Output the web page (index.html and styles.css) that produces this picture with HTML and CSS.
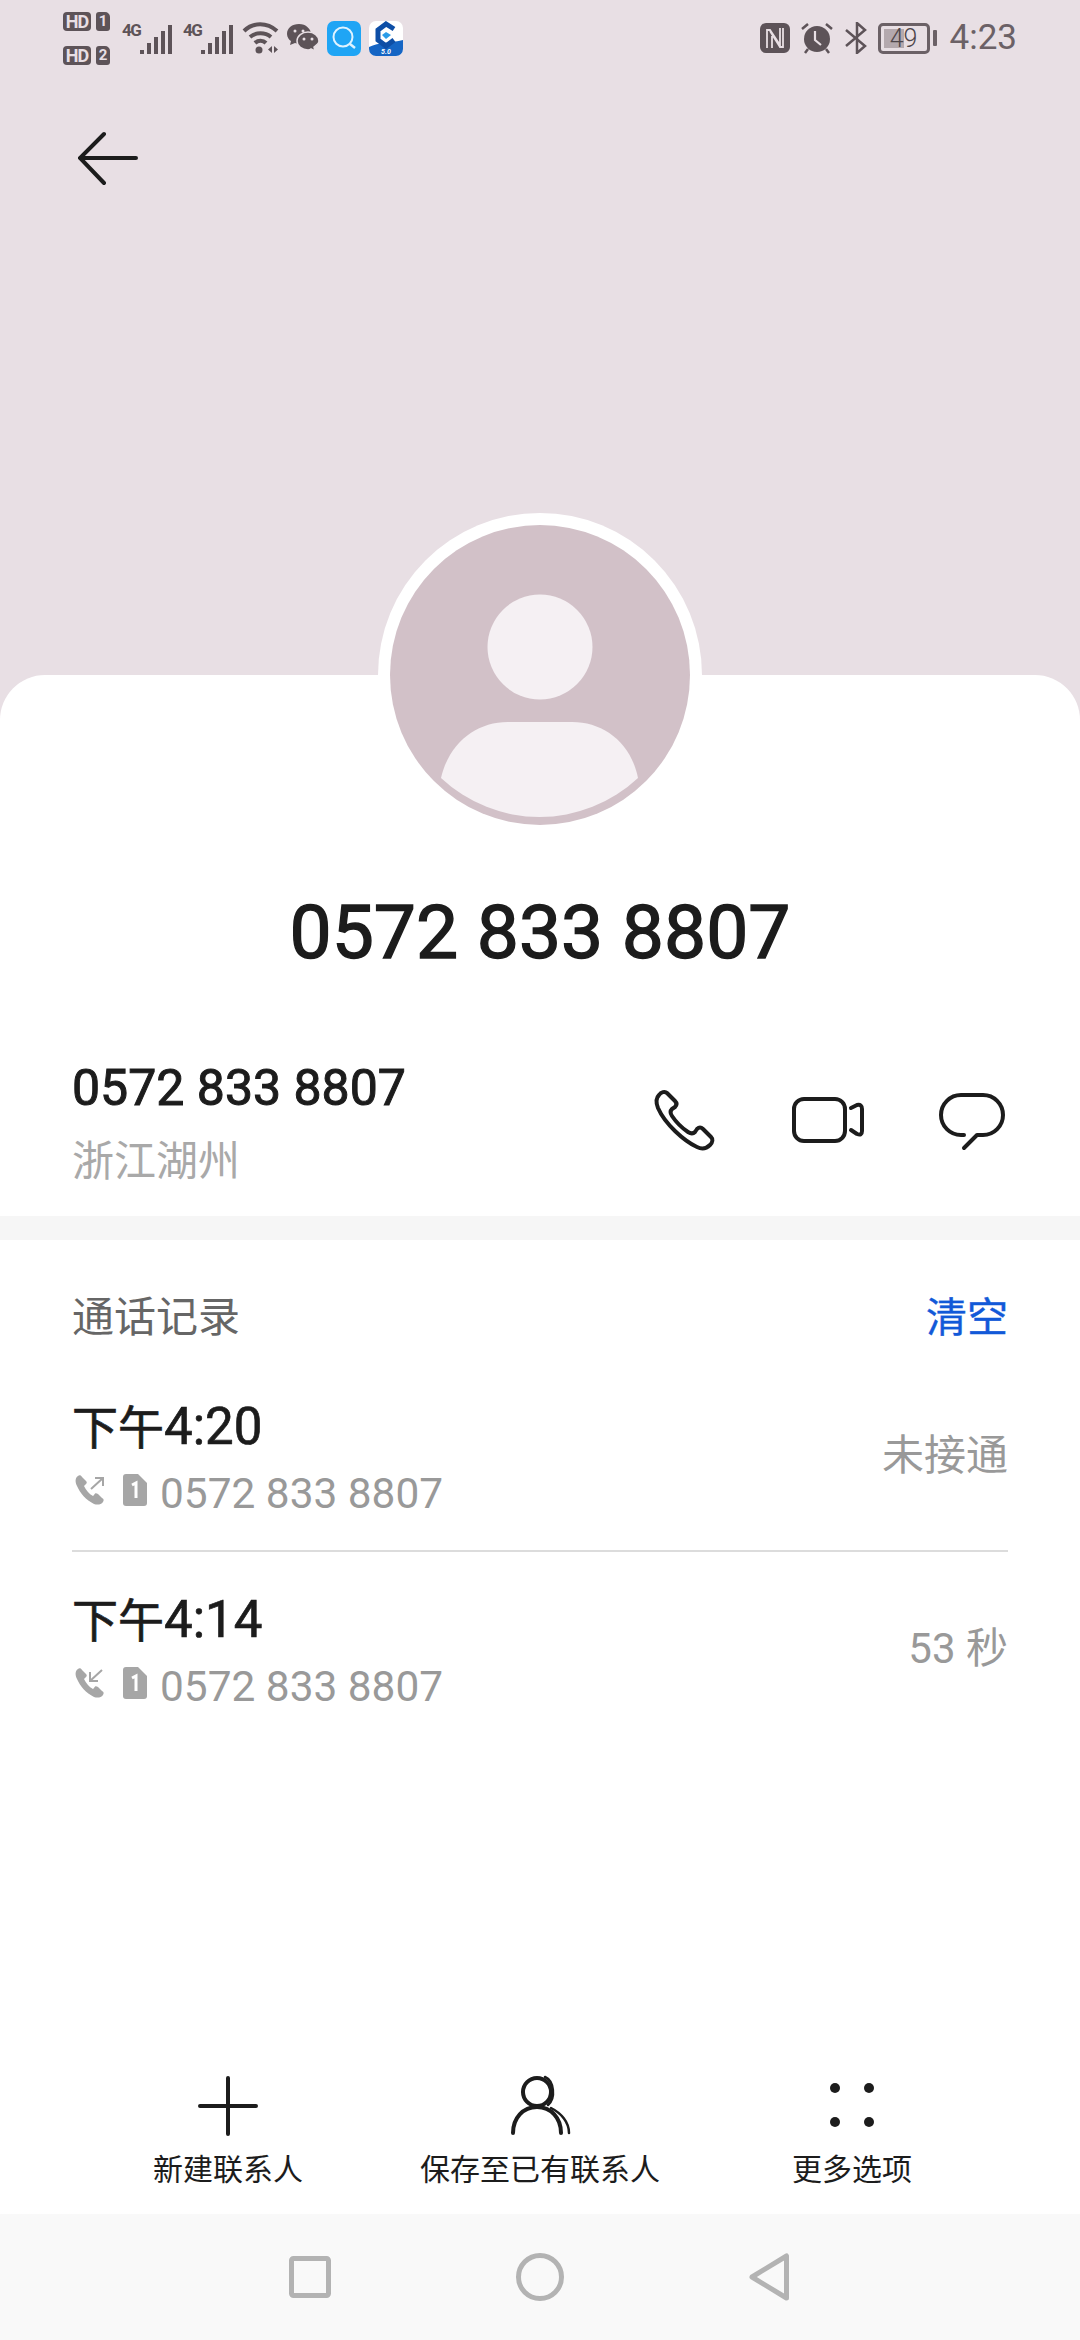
FILE: index.html
```html
<!DOCTYPE html>
<html lang="zh-CN">
<head>
<meta charset="utf-8">
<title>通话详情</title>
<link rel="stylesheet" href="styles.css">
</head>
<body>
<div class="phone">
  <header class="hero">
    <div class="status">
      <div class="status-left">
        <div class="hd-stack">
          <div class="hd-line"><span class="hd">HD</span><span class="sim-num">1</span></div>
          <div class="hd-line"><span class="hd">HD</span><span class="sim-num">2</span></div>
        </div>
        <div class="net"><span class="net-label">4G</span>
          <svg class="bars" viewBox="0 0 33 30"><path d="M3 26v4M10 19v11M17 13v17M24 7v23M31 1v29"/></svg></div>
        <div class="net"><span class="net-label">4G</span>
          <svg class="bars" viewBox="0 0 33 30"><path d="M3 26v4M10 19v11M17 13v17M24 7v23M31 1v29"/></svg></div>
        <svg class="wifi" viewBox="0 0 38 32"><path class="wifi-arc" d="M2 9C11 0 25 0 35 9M8 15c6-5 15-5 21 0M13 21c3-3 8-3 11 0"/><circle class="wifi-dot" cx="17" cy="28" r="3.500"/><path class="wifi-dot" d="M30 24v7l-4-3.500zM32 24v7l4-3.500z"/></svg>
        <svg class="wechat" viewBox="0 0 32 28"><path class="wc-a" d="M12 0C5 0 0 4 0 10c0 3 2 6 4 7l-1 4 5-2c1 0 3 1 4 1 7 0 12-5 12-10S19 0 12 0z"/><path class="wc-b" d="M21 8c-6 0-11 4-11 9s5 9 11 9c1 0 2 0 3-1l4 2-1-4c3-2 5-4 5-6 0-5-5-9-11-9z"/><circle class="wc-eye" cx="8" cy="7" r="1.500"/><circle class="wc-eye" cx="16" cy="7" r="1.500"/><circle class="wc-eye" cx="17" cy="15" r="1.500"/><circle class="wc-eye" cx="25" cy="15" r="1.500"/></svg>
        <svg class="app" viewBox="0 0 34 35"><rect width="34" height="35" rx="7" fill="#1fa5f5"/><circle cx="16" cy="16" r="9.500" fill="none" stroke="#dff3ff" stroke-width="2"/><path d="M23 23l5 4" stroke="#dff3ff" stroke-width="2.500"/></svg>
        <svg class="app" viewBox="0 0 34 35"><rect width="34" height="35" rx="7" fill="#fff"/><path d="M0 26c10-5 22-4 34-7v9a7 7 0 0 1-7 7H7a7 7 0 0 1-7-7z" fill="#1565c4"/><path d="M25 8l-8-5-8 6v10l8 6 8-6" fill="none" stroke="#0d4ea6" stroke-width="5"/><path d="M13 14l4-3 5 3-5 4z" fill="#2b9ce8"/><text x="17" y="33" class="app-text">5.0</text></svg>
      </div>
      <div class="status-right">
        <svg class="nfc" viewBox="0 0 30 30"><rect width="30" height="30" rx="6" fill="#5d5358"/><path d="M7 25V7h3l10 15V5M12 25V13M23 5v19h-3L10 8" fill="none" stroke="#e8dfe4" stroke-width="1.800"/></svg>
        <svg class="alarm" viewBox="0 0 32 32"><path d="M1 7l6-5M31 7l-6-5M7 27l-3 4M25 27l3 4" stroke="#5d5358" stroke-width="2.500"/><circle cx="16" cy="17" r="13" fill="#5d5358"/><path d="M14 9v9l6 5" fill="none" stroke="#e8dfe4" stroke-width="2.200"/></svg>
        <svg class="bt" viewBox="0 0 24 32"><path d="M2 8l19 16-8 7V1l8 7L2 24" fill="none" stroke="#5d5358" stroke-width="2.500"/></svg>
        <div class="battery"><div class="battery-body"><span class="battery-fill"></span><span class="battery-text">49</span></div><span class="battery-nub"></span></div>
        <span class="clock">4:23</span>
      </div>
    </div>
    <div class="back">
      <svg viewBox="0 0 60 56"><path d="M26 3L2 27l24 25M2 27h56" fill="none" stroke="#1c1c1c" stroke-width="4" stroke-linecap="round"/></svg>
    </div>
  </header>

  <main class="card">
    <div class="avatar">
      <svg viewBox="0 0 300 300">
        <circle cx="150" cy="150" r="150" fill="#d2c1c8"/>
        <circle cx="150" cy="122" r="52.500" fill="#f5f0f3"/>
        <path d="M51 253C59 218 86 197 118 197h64c32 0 59 21 66 56A144 144 0 0 1 51 253z" fill="#f5f0f3"/>
      </svg>
    </div>
    <h1 class="title">0572 833 8807</h1>

    <section class="contact">
      <div class="contact-text">
        <div class="contact-num">0572 833 8807</div>
        <div class="contact-loc">浙江湖州</div>
      </div>
      <div class="contact-actions">
        <svg class="act" viewBox="0 0 72 72"><path d="M11 11C13 8 17 7 19 9l8 8c2 2 2 4 0 6l-3 2c-2 2-2 4 0 7 4 6 10 12 16 16 3 2 5 2 7 0l2-3c2-2 4-2 6 0l8 8c2 2 2 5-1 8-4 4-9 4-13 2C36 57 17 40 10 24 8 19 8 14 11 11z"/></svg>
        <svg class="act" viewBox="0 0 72 72"><rect x="2" y="15" width="51" height="42" rx="10"/><path d="M59 24l6-3q5-1 5 4v22q0 5-5 3l-6-4"/></svg>
        <svg class="act" viewBox="0 0 72 72"><path d="M28 51h-3a20 20 0 0 1 0-40h22a20 20 0 0 1 0 40h-6L28 64"/></svg>
      </div>
    </section>

    <div class="gap-band"></div>

    <section class="history">
      <div class="history-head"><span class="history-title">通话记录</span><span class="history-clear">清空</span></div>
      <div class="call call-line">
        <div class="call-main">
          <div class="call-time">下午<span class="call-clock">4:20</span></div>
          <div class="call-sub">
            <svg class="dir" viewBox="0 0 30 30"><path class="dir-fill" d="M3 1c-3 2-3 6-1 10 3 7 9 14 17 18 3 1 7 1 9-2 1-2 1-3-1-4l-4-4c-2-1-3-1-4 1l-1 1c-4-2-7-6-9-10l2-2c1-1 1-2 0-3L7 2C6 0 4 0 3 1z"/><path class="dir-line" d="M16 14L28 3M20 3h8v8"/></svg>
            <svg class="simcard" viewBox="0 0 24 32"><path d="M3 0h12l9 9v20a3 3 0 0 1-3 3H3a3 3 0 0 1-3-3V3a3 3 0 0 1 3-3z" fill="#a6a6a6"/><path d="M9 11l4-2v15" fill="none" stroke="#fff" stroke-width="3"/></svg>
            <span class="call-num">0572 833 8807</span>
          </div>
        </div>
        <span class="call-state">未接通</span>
      </div>
      <div class="call">
        <div class="call-main">
          <div class="call-time">下午<span class="call-clock">4:14</span></div>
          <div class="call-sub">
            <svg class="dir" viewBox="0 0 30 30"><path class="dir-fill" d="M3 1c-3 2-3 6-1 10 3 7 9 14 17 18 3 1 7 1 9-2 1-2 1-3-1-4l-4-4c-2-1-3-1-4 1l-1 1c-4-2-7-6-9-10l2-2c1-1 1-2 0-3L7 2C6 0 4 0 3 1z"/><path class="dir-line" d="M27 2L15 13M15 4v9h8"/></svg>
            <svg class="simcard" viewBox="0 0 24 32"><path d="M3 0h12l9 9v20a3 3 0 0 1-3 3H3a3 3 0 0 1-3-3V3a3 3 0 0 1 3-3z" fill="#a6a6a6"/><path d="M9 11l4-2v15" fill="none" stroke="#fff" stroke-width="3"/></svg>
            <span class="call-num">0572 833 8807</span>
          </div>
        </div>
        <span class="call-state">53 秒</span>
      </div>
    </section>

    <nav class="toolbar">
      <div class="tool">
        <svg class="tool-icon" viewBox="0 0 72 72"><path d="M36 8v56M8 36h56"/></svg>
        <span class="tool-label">新建联系人</span>
      </div>
      <div class="tool">
        <svg class="tool-icon" viewBox="0 0 72 72"><circle cx="33" cy="22" r="14"/><path d="M9 63c0-15 10-26 24-26s24 11 24 26"/><path class="thin" d="M41 7c9 4 11 21 3 28M47 38c10 5 18 14 18 25"/></svg>
        <span class="tool-label">保存至已有联系人</span>
      </div>
      <div class="tool">
        <svg class="tool-icon" viewBox="0 0 72 72"><circle class="dot" cx="19" cy="18" r="5"/><circle class="dot" cx="53" cy="18" r="5"/><circle class="dot" cx="19" cy="52" r="5"/><circle class="dot" cx="53" cy="52" r="5"/></svg>
        <span class="tool-label">更多选项</span>
      </div>
    </nav>
  </main>

  <footer class="navbar">
    <svg class="nav-icon" viewBox="0 0 60 60"><rect x="11.500" y="11.500" width="37" height="37" rx="2"/></svg>
    <svg class="nav-icon" viewBox="0 0 60 60"><circle cx="30" cy="30" r="21.500"/></svg>
    <svg class="nav-icon" viewBox="0 0 60 60"><path d="M46.500 9v42L12 30z"/></svg>
  </footer>
</div>
</body>
</html>
```
FILE: styles.css
```css
* { box-sizing: border-box; }
html, body { margin: 0; padding: 0; }
body { font-family: Roboto, "Noto Sans CJK SC", sans-serif; color: #1c1c1c; background: #fff; }
.phone { width: 1080px; height: 2340px; display: flex; flex-direction: column; overflow: hidden; background: #e8dfe4; }

.hero { height: 675px; flex: none; }
.status { height: 76px; display: flex; justify-content: space-between; align-items: center; padding: 0 63px; }
.status-left, .status-right { display: flex; align-items: center; }
.hd-stack { display: flex; flex-direction: column; gap: 15px; }
.hd-line { display: flex; gap: 5px; height: 19px; }
.hd { width: 28px; height: 19px; border-radius: 4px; background: #5d5358; color: #e8dfe4; font-size: 18px; font-weight: 700; letter-spacing: -1px; line-height: 19px; text-align: center; }
.sim-num { width: 14px; height: 19px; border-radius: 3px 5px 3px 3px; background: #5d5358; color: #e8dfe4; font-size: 15px; font-weight: 700; line-height: 19px; text-align: center; }
.net { display: flex; align-items: flex-end; width: 50px; height: 32px; margin-left: 12px; position: relative; }
.net + .net { margin-left: 11px; }
.net-label { position: absolute; left: 0; top: 0; width: 17px; color: #5d5358; font-size: 17px; font-weight: 700; line-height: 16px; letter-spacing: -1.5px; }
.bars { width: 33px; height: 30px; margin-left: 17px; fill: none; stroke: #5d5358; stroke-width: 4; }
.wifi { width: 38px; height: 32px; margin-left: 9px; }
.wifi-arc { fill: none; stroke: #5d5358; stroke-width: 4; }
.wifi-dot { fill: #5d5358; }
.wechat { width: 32px; height: 28px; margin-left: 7px; }
.wc-a { fill: #5d5358; }
.wc-b { fill: #5d5358; stroke: #e8dfe4; stroke-width: 1.500; }
.wc-eye { fill: #e8dfe4; }
.app { width: 34px; height: 35px; margin-left: 8px; }
.app:first-of-type { margin-left: 9px; }
.app-text { fill: #fff; font-size: 7px; font-style: italic; font-weight: 700; text-anchor: middle; }
.nfc { width: 30px; height: 30px; }
.alarm { width: 32px; height: 32px; margin-left: 11px; }
.bt { width: 24px; height: 32px; margin-left: 11px; }
.battery { display: flex; align-items: center; margin-left: 10px; }
.battery-body { position: relative; width: 52px; height: 31px; border: 3px solid #6b6166; border-radius: 5px; padding: 3px; }
.battery-fill { display: block; width: 20px; height: 19px; background: #b4a9ae; }
.battery-text { position: absolute; inset: 0; color: #4e464a; font-size: 25px; font-weight: 300; line-height: 25px; text-align: center; }
.battery-nub { width: 4px; height: 16px; margin-left: 3px; background: #6b6166; border-radius: 1px; }
.clock { margin-left: 13px; color: #6b6166; font-size: 35px; line-height: 40px; }
.back { padding: 55px 0 0 78px; }
.back svg { display: block; width: 60px; height: 56px; }

.card { flex: 1; display: flex; flex-direction: column; background: #fff; border-radius: 45px 45px 0 0; min-height: 0; }
.avatar { width: 324px; height: 324px; margin: -162px auto 0; padding: 12px; border-radius: 50%; background: #fff; flex: none; }
.avatar svg { display: block; width: 300px; height: 300px; }
.title { margin: 45px 0 0; height: 100px; font-size: 75px; font-weight: 400; -webkit-text-stroke: 1.4px #1c1c1c; line-height: 100px; text-align: center; color: #1c1c1c; }

.contact { display: flex; justify-content: space-between; padding: 76px 72px 24px; }
.contact-num { font-size: 50px; font-weight: 400; -webkit-text-stroke: 1px #1c1c1c; line-height: 60px; }
.contact-loc { margin-top: 14px; color: #a9a9a9; font-size: 42px; line-height: 60px; }
.contact-actions { display: flex; gap: 72px; margin-top: 26px; }
.act { width: 72px; height: 72px; fill: none; stroke: #1c1c1c; stroke-width: 4; stroke-linecap: round; stroke-linejoin: round; }

.gap-band { height: 24px; background: #f6f6f6; flex: none; }

.history { padding: 48px 72px 0; }
.history-head { display: flex; justify-content: space-between; height: 71px; line-height: 60px; }
.history-title { color: #666; font-size: 42px; }
.history-clear { color: #1259d8; font-size: 41px; -webkit-text-stroke: 0.4px #1259d8; }
.call { height: 193px; padding-top: 38px; display: flex; justify-content: space-between; }
.call-line { border-bottom: 2px solid #dcdcdc; }
.call-time { font-size: 46px; line-height: 60px; -webkit-text-stroke: 0.7px #1c1c1c; }
.call-clock { font-size: 51px; }
.call-sub { display: flex; align-items: center; height: 50px; margin-top: 11px; }
.dir { width: 30px; height: 30px; margin-left: 3px; margin-top: -8px; }
.dir-fill { fill: #a6a6a6; }
.dir-line { fill: none; stroke: #a6a6a6; stroke-width: 2; }
.simcard { width: 24px; height: 32px; margin-left: 18px; margin-top: -8px; }
.call-num { margin-left: 13px; color: #999; font-size: 42.400px; line-height: 50px; }
.call-state { height: 60px; margin-top: 29px; color: #999; font-size: 42px; line-height: 60px; }

.toolbar { margin-top: auto; display: grid; grid-template-columns: repeat(3, 1fr); padding: 0 72px 19px; }
.tool { display: flex; flex-direction: column; align-items: center; gap: 3px; }
.tool-icon { width: 72px; height: 72px; fill: none; stroke: #1c1c1c; stroke-width: 4; stroke-linecap: round; }
.tool-icon .thin { stroke-width: 2.500; }
.tool-icon .dot { fill: #1c1c1c; stroke: none; }
.tool-label { font-size: 30px; line-height: 50px; color: #1c1c1c; }

.navbar { height: 126px; flex: none; display: flex; justify-content: center; align-items: center; gap: 170px; background: #f9f9f9; }
.nav-icon { width: 60px; height: 60px; fill: none; stroke: #b3b3b3; stroke-width: 5; stroke-linejoin: round; }
```
